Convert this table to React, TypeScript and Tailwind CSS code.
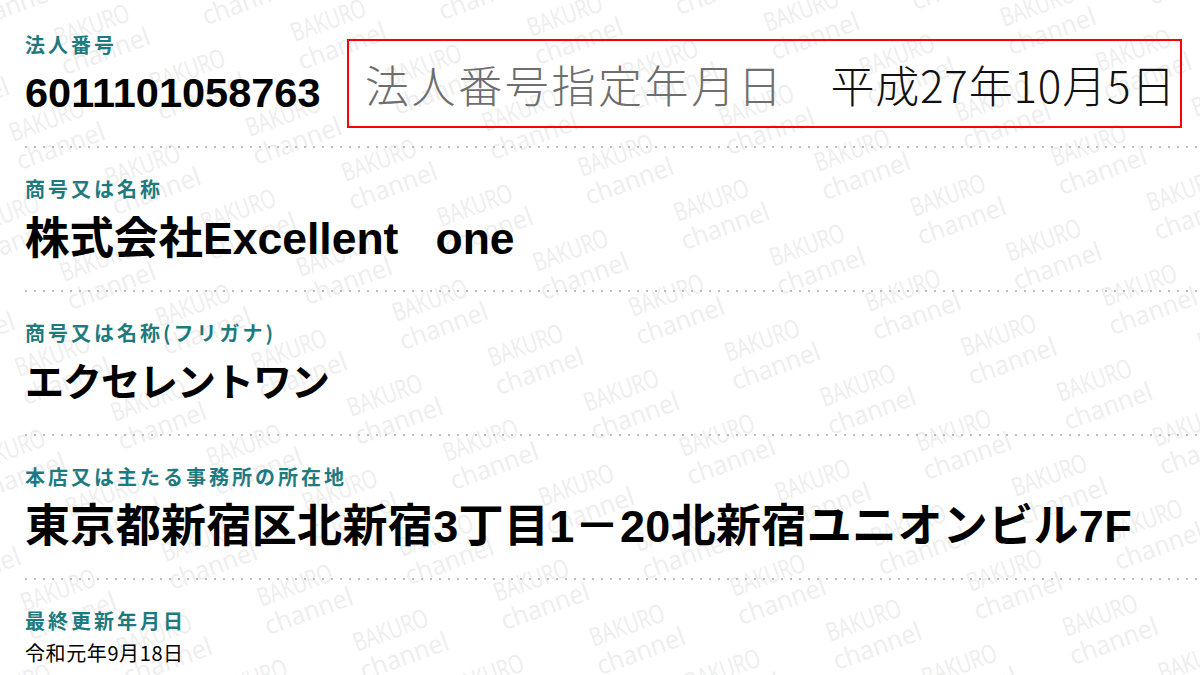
const jp = "font-['Noto_Sans_CJK_JP',sans-serif]";
const val = "font-['Liberation_Sans','Noto_Sans_CJK_JP',sans-serif]";

const label = `${jp} text-[20px] leading-[24px] tracking-[3px] font-bold text-[#1d7b80]`;
const bigValue = `${val} leading-[45px] font-bold text-black whitespace-pre`;

// lattice of the "BAKURO / channel" watermark
const marks: { x: number; y: number }[] = [];
for (let k = -14; k <= 18; k++) {
  for (let l = -8; l <= 12; l++) {
    const x = 582 + k * 95.75 - l * 45;
    const y = 177 + k * 45 + l * 95;
    if (x > -160 && x < 1320 && y > -60 && y < 780) marks.push({ x, y });
  }
}

function Watermark() {
  return (
    <svg
      className="absolute left-0 top-0 pointer-events-none"
      width={1200}
      height={675}
      viewBox="0 0 1200 675"
    >
      <g fill="#eeeeee" fontFamily="'Open Sans', sans-serif" fontSize={26}>
        {marks.map((m, i) => (
          <g key={i} transform={`translate(${m.x} ${m.y}) rotate(-20)`}>
            <text x={0} y={0} textLength={78} lengthAdjust="spacingAndGlyphs">
              BAKURO
            </text>
            <text x={-3} y={29} textLength={92} lengthAdjust="spacingAndGlyphs">
              channel
            </text>
          </g>
        ))}
      </g>
    </svg>
  );
}

function Separator() {
  return (
    <div className="h-[2px] bg-[linear-gradient(to_right,#bdbdbd_2px,transparent_2px)] bg-[length:9px_2px] bg-repeat-x" />
  );
}

function Section({
  title,
  valueClass,
  children,
}: {
  title: string;
  valueClass: string;
  children: React.ReactNode;
}) {
  return (
    <>
      <Separator />
      <div className="pt-[29px] pb-[29px]">
        <div className={label}>{title}</div>
        <div className={`mt-[15px] ${bigValue} ${valueClass}`}>{children}</div>
      </div>
    </>
  );
}

export default function App() {
  return (
    <div className="relative w-[1200px] h-[675px] overflow-hidden bg-white">
      <Watermark />
      <div className="relative pl-[25px] pt-[33px]">
        <div className="flex items-start">
          <div className="w-[322px] shrink-0">
            <div className={label}>法人番号</div>
            <div
              className={`mt-[15px] ${val} text-[41.5px] leading-[41px] font-bold text-black`}
            >
              6011101058763
            </div>
          </div>
          <div
            className={`mt-[6px] w-[835px] h-[89px] shrink-0 border-2 border-[#ff0000] flex items-center pl-[16px] ${jp} text-[44px] font-light whitespace-nowrap`}
          >
            <span className="text-[#6e6e6e] tracking-[2.6px]">法人番号指定年月日</span>
            <span className="ml-[46px] text-[#111111] tracking-[0.8px]">平成27年10月5日</span>
          </div>
        </div>
        <div className="mt-[18px]">
          <Section title="商号又は名称" valueClass="text-[44.5px]">
            {"株式会社Excellent   one"}
          </Section>
          <Section title="商号又は名称(フリガナ)" valueClass="text-[39px] tracking-[-1px]">
            エクセレントワン
          </Section>
          <Section title="本店又は主たる事務所の所在地" valueClass="text-[45px] tracking-[0.35px]">
            東京都新宿区北新宿3丁目1－20北新宿ユニオンビル7F
          </Section>
          <Separator />
          <div className="pt-[29px]">
            <div className={label}>最終更新年月日</div>
            <div
              className={`mt-[8px] ${jp} text-[20px] leading-[24px] tracking-[0.6px] text-black`}
            >
              令和元年9月18日
            </div>
          </div>
        </div>
      </div>
    </div>
  );
}
